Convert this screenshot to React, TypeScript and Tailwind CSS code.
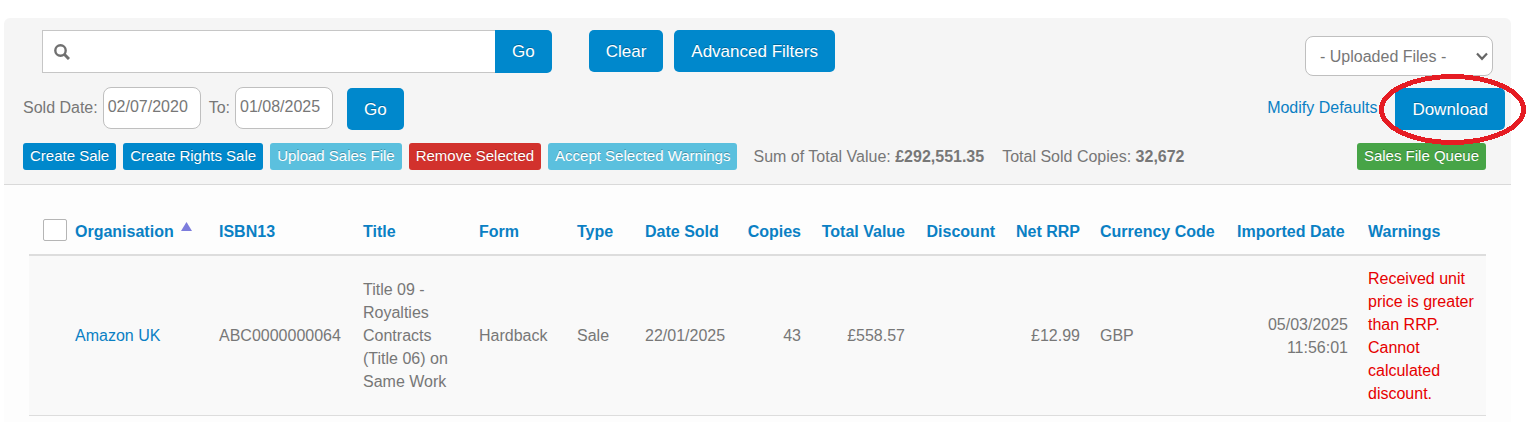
import React, { useState } from 'react';

interface Sale {
  organisation: string;
  isbn: string;
  title: string;
  form: string;
  type: string;
  dateSold: string;
  copies: number;
  totalValue: string;
  discount: string;
  netRrp: string;
  currency: string;
  imported: string;
  warnings: string;
}

const sales: Sale[] = [
  {
    organisation: 'Amazon UK',
    isbn: 'ABC0000000064',
    title: 'Title 09 - Royalties Contracts (Title 06) on Same Work',
    form: 'Hardback',
    type: 'Sale',
    dateSold: '22/01/2025',
    copies: 43,
    totalValue: '£558.57',
    discount: '',
    netRrp: '£12.99',
    currency: 'GBP',
    imported: '05/03/2025 11:56:01',
    warnings: 'Received unit price is greater than RRP. Cannot calculated discount.',
  },
];

const columns = [
  { label: 'Organisation', width: 'w-[134px]', head: 'pl-0 text-left', cell: 'pl-0 text-left', sorted: true },
  { label: 'ISBN13', width: 'w-[144px]', head: 'text-left', cell: 'text-left' },
  { label: 'Title', width: 'w-[116px]', head: 'text-left', cell: 'text-left' },
  { label: 'Form', width: 'w-[98px]', head: 'text-left', cell: 'text-left' },
  { label: 'Type', width: 'w-[68px]', head: 'text-left', cell: 'text-left' },
  { label: 'Date Sold', width: 'w-[102px]', head: 'text-left', cell: 'text-left' },
  { label: 'Copies', width: 'w-[74px]', head: 'text-right', cell: 'text-right' },
  { label: 'Total Value', width: 'w-[104px]', head: 'text-right', cell: 'text-right' },
  { label: 'Discount', width: 'w-[90px]', head: 'text-right', cell: 'text-right' },
  { label: 'Net RRP', width: 'w-[85px]', head: 'text-right', cell: 'text-right' },
  { label: 'Currency Code', width: 'w-[137px]', head: 'text-left', cell: 'text-left' },
  { label: 'Imported Date', width: 'w-[131px]', head: 'text-left', cell: 'text-right' },
  { label: 'Warnings', width: 'w-[128px]', head: 'text-left', cell: 'text-left' },
];

interface ButtonProps {
  className?: string;
  children: React.ReactNode;
}

const LargeButton: React.FC<ButtonProps> = ({ className = 'h-[42px] rounded-[5px]', children }) => (
  <button type="button" className={`shrink-0 cursor-pointer bg-[#0088cc] px-[17px] text-[17px] text-white [text-shadow:0_-1px_0_rgba(0,0,0,0.25)] ${className}`}>{children}</button>
);

const SmallButton: React.FC<ButtonProps> = ({ className = 'bg-[#0088cc]', children }) => (
  <button type="button" className={`h-[27px] shrink-0 cursor-pointer rounded-[3px] px-[7px] pb-[2px] text-[15px] text-white [text-shadow:0_-1px_0_rgba(0,0,0,0.25)] ${className}`}>{children}</button>
);

const Filters = () => {
  const [from, setFrom] = useState('02/07/2020');
  const [to, setTo] = useState('01/08/2025');

  return (
    <header className="rounded-t-md border-b border-[#d9d9d9] bg-[#f5f5f5] pt-3 pb-[14px] pl-[19px]">
      <div className="flex items-start pr-[18px] pl-[19px]">
        <label className="flex h-[43px] w-[453px] items-center border border-r-0 border-[#c6c6c6] bg-white pl-[11px]">
          <svg width="16" height="16" viewBox="0 0 16 16" fill="none" stroke="#707070" aria-hidden="true">
            <circle cx="6.5" cy="6.5" r="5.2" strokeWidth="2.4" />
            <path d="M10.3 10.3 L15 15" strokeWidth="3" />
          </svg>
          <input type="text" aria-label="Search" className="h-full min-w-0 flex-1 px-2 outline-none" />
        </label>
        <LargeButton className="h-[43px] rounded-r-[5px]">Go</LargeButton>
        <div className="ml-[37px] flex gap-[11px]">
          <LargeButton>Clear</LargeButton>
          <LargeButton>Advanced Filters</LargeButton>
        </div>
        <div className="relative mt-[6px] ml-auto">
          <select aria-label="Uploaded files" className="h-10 w-[188px] appearance-none rounded-lg border border-[#bfbfbf] bg-white pl-[14px] outline-none">
            <option>- Uploaded Files -</option>
          </select>
          <svg className="pointer-events-none absolute top-4 right-[5px]" width="12" height="9" viewBox="0 0 12 9" fill="none" stroke="#666" strokeWidth="2.2" aria-hidden="true">
            <path d="M1 1.5 L6 6.8 L11 1.5" />
          </svg>
        </div>
      </div>

      <div className="mt-[11px] flex items-start pr-[6px] leading-[41px]">
        <label htmlFor="from" className="mr-[5px]">Sold Date:</label>
        <input id="from" value={from} onChange={(e) => setFrom(e.target.value)} className="h-[42px] w-[98px] rounded-lg border border-[#bfbfbf] bg-white px-1 pb-[2px] outline-none" />
        <label htmlFor="to" className="mr-[5px] ml-2">To:</label>
        <input id="to" value={to} onChange={(e) => setTo(e.target.value)} className="mr-[14px] h-[42px] w-[98px] rounded-lg border border-[#bfbfbf] bg-white px-1 pb-[2px] outline-none" />
        <div className="flex pt-px">
          <LargeButton>Go</LargeButton>
        </div>
        <a href="#defaults" className="mr-[18px] ml-auto text-[#0a80c4]">Modify Defaults</a>
        <div className="relative flex pt-px">
          <LargeButton>Download</LargeButton>
          <svg className="pointer-events-none absolute -top-[13px] -left-4 max-w-none" width="147" height="71" viewBox="0 0 147 71" fill="none" shapeRendering="crispEdges" aria-hidden="true">
            <ellipse cx="73.5" cy="35.5" rx="71" ry="33" stroke="#e51c23" strokeWidth="5" />
          </svg>
        </div>
      </div>

      <div className="mt-[13px] flex items-center pr-[25px]">
        <div className="flex gap-[7px]">
          <SmallButton>Create Sale</SmallButton>
          <SmallButton>Create Rights Sale</SmallButton>
          <SmallButton className="bg-[#5bc0de]">Upload Sales File</SmallButton>
          <SmallButton className="bg-[#d2322d]">Remove Selected</SmallButton>
          <SmallButton className="bg-[#5bc0de]">Accept Selected Warnings</SmallButton>
        </div>
        <p className="ml-4">Sum of Total Value: <b>£292,551.35</b></p>
        <p className="ml-[18px]">Total Sold Copies: <b>32,672</b></p>
        <SmallButton className="ml-auto bg-[#47a447]">Sales File Queue</SmallButton>
      </div>
    </header>
  );
};

const SalesTable = () => (
  <table className="w-full table-fixed border-separate border-spacing-0">
    <thead>
      <tr className="h-[47px]">
        <th className="w-[46px] border-b-2 border-[#dddddd] pt-[10px] pl-[14px] text-left align-top">
          <input type="checkbox" aria-label="Select all" className="block h-[22px] w-6 appearance-none rounded-[2px] border border-[#b5b5b5] bg-white" />
        </th>
        {columns.map((col) => (
          <th key={col.label} className={`border-b-2 border-[#dddddd] px-[10px] whitespace-nowrap ${col.width} ${col.head}`}>
            <a href="#sort" className="text-[#0a80c4]">{col.label}</a>
            {col.sorted && (
              <svg className="mt-[2px] ml-[7px] inline-block align-top" width="11" height="9" viewBox="0 0 11 9" fill="#7c7cdc" aria-hidden="true"><path d="M5.5 0 L11 9 H0 Z" /></svg>
            )}
          </th>
        ))}
      </tr>
    </thead>
    <tbody>
      {sales.map((sale) => {
        const { organisation, ...rest } = sale;
        return (
          <tr key={sale.isbn} className="h-40 bg-[#f9f9f9]">
            <td className="border-b border-[#dddddd]" />
            <td className="border-b border-[#dddddd]"><a href="#organisation" className="text-[#0a80c4]">{organisation}</a></td>
            {Object.entries(rest).map(([key, value], i) => (
              <td key={key} className={`border-b border-[#dddddd] px-[10px] py-[10px] ${columns[i + 1].cell} ${key === 'warnings' ? 'text-[#e60000]' : ''}`}>{value}</td>
            ))}
          </tr>
        );
      })}
    </tbody>
  </table>
);

export default function App() {
  return (
    <div className="flex min-h-screen flex-col bg-white pt-[18px] pr-[17px] pl-1 font-['Liberation_Sans',Arial,sans-serif] text-base leading-[23px] text-[#777777]">
      <Filters />
      <main className="flex-1 bg-[#fdfdfd] px-[25px] pt-6">
        <SalesTable />
      </main>
    </div>
  );
}
